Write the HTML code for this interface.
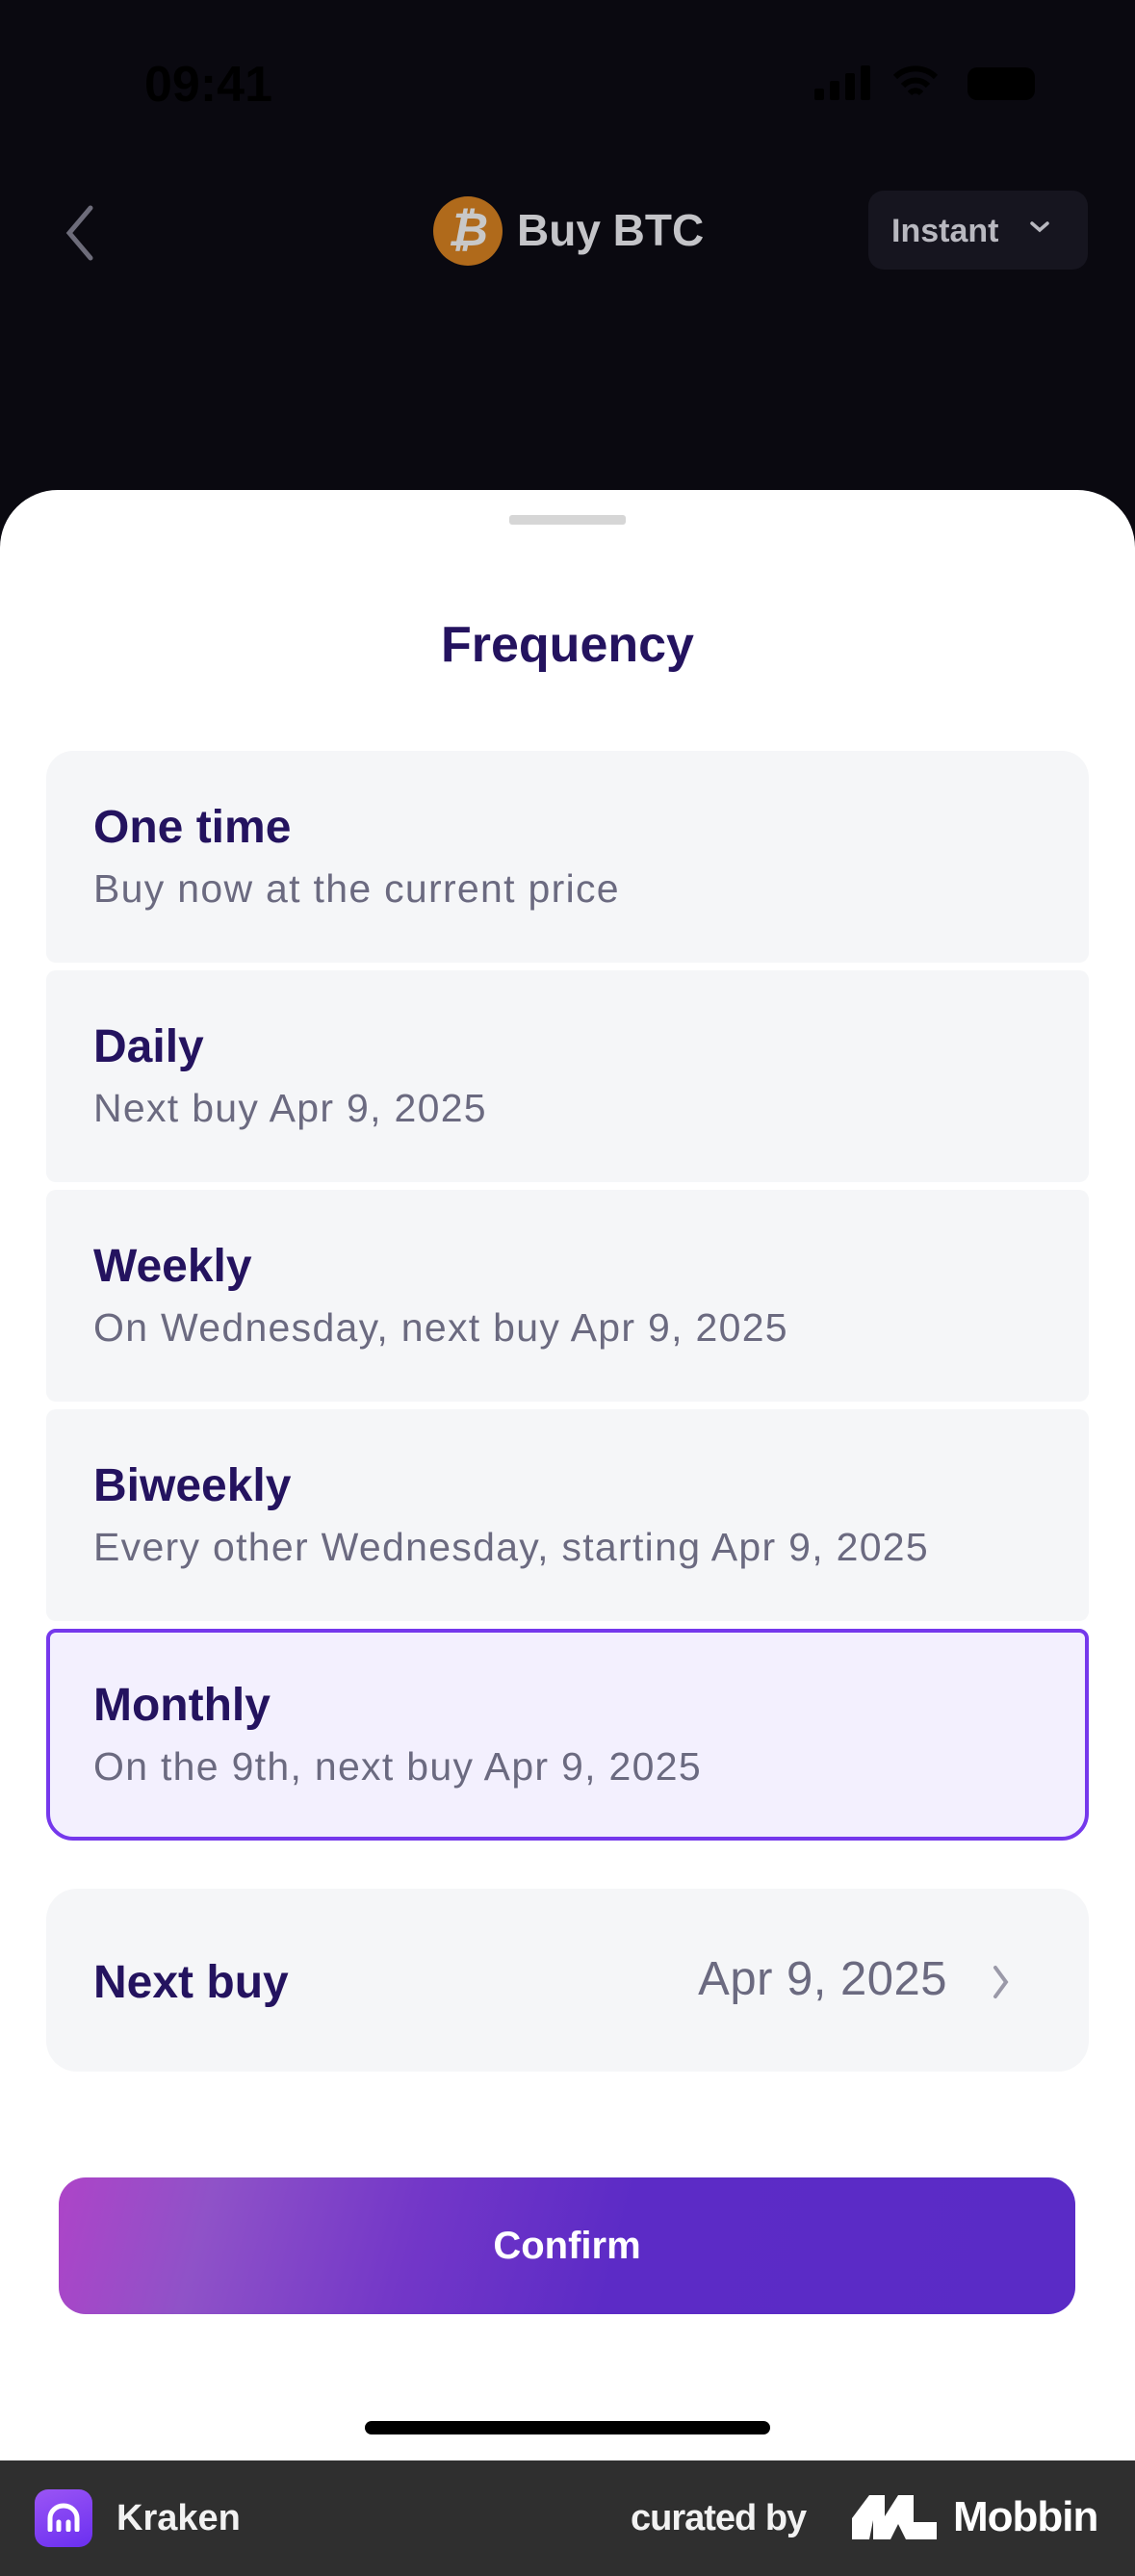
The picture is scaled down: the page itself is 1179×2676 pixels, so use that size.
<!DOCTYPE html>
<html><head><meta charset="utf-8"><style>
*{margin:0;padding:0;box-sizing:border-box}
body{width:1179px;height:2676px;position:relative;overflow:hidden;background:#0a0910;font-family:"Liberation Sans",sans-serif}
.abs{position:absolute}
.card{position:absolute;left:48px;width:1083px;height:220px;background:#f5f6f8;border-radius:10px}
.t{position:absolute;left:49px;top:52px;font-size:48px;font-weight:bold;color:#24135f}
.s{position:absolute;left:49px;top:120px;font-size:41px;letter-spacing:1.3px;color:#6b6a80}
</style></head><body>
<div class="abs" style="left:150px;top:58px;font-size:52px;font-weight:bold;color:#000">09:41</div>
<div class="abs" style="left:846px;top:92px;width:10px;height:12px;background:#000;border-radius:2px"></div>
<div class="abs" style="left:862px;top:84px;width:10px;height:20px;background:#000;border-radius:2px"></div>
<div class="abs" style="left:878px;top:76px;width:10px;height:28px;background:#000;border-radius:2px"></div>
<div class="abs" style="left:894px;top:68px;width:10px;height:36px;background:#000;border-radius:2px"></div>
<svg class="abs" style="left:926px;top:66px" width="50" height="40"><path d="M4 14 A30 30 0 0 1 46 14 M12 23 A18 18 0 0 1 38 23 M19 31 A8 8 0 0 1 31 31" stroke="#000" stroke-width="6" fill="none"/></svg>
<div class="abs" style="left:1005px;top:70px;width:70px;height:34px;background:#000;border-radius:10px"></div>
<svg class="abs" style="left:62px;top:212px" width="40" height="60"><path d="M32 4 L10 30 L32 56" stroke="#6d6c7a" stroke-width="5" fill="none" stroke-linecap="round"/></svg>
<div class="abs" style="left:450px;top:204px;width:72px;height:72px;border-radius:50%;background:#b06a1b;color:#c8c8c8;font-size:48px;font-weight:bold;text-align:center;line-height:72px;font-style:italic">₿</div>
<div class="abs" style="left:537px;top:212px;font-size:46px;font-weight:bold;color:#c4c4c8">Buy BTC</div>
<div class="abs" style="left:902px;top:198px;width:228px;height:82px;border-radius:16px;background:#16151f"></div>
<div class="abs" style="left:926px;top:221px;font-size:34px;font-weight:bold;color:#b8b8bf">Instant</div>
<svg class="abs" style="left:1068px;top:228px" width="24" height="16"><path d="M4 4 L12 11 L20 4" stroke="#b8b8bf" stroke-width="3.5" fill="none" stroke-linecap="round"/></svg>
<div class="abs" style="left:0;top:509px;width:1179px;height:2047px;background:#fff;border-radius:60px 60px 0 0"></div>
<div class="abs" style="left:529px;top:535px;width:121px;height:10px;background:#d6d6d6;border-radius:3px"></div>
<div class="abs" style="left:0;top:640px;width:1179px;text-align:center;font-size:52px;font-weight:bold;color:#24135f">Frequency</div>
<div class="card" style="top:780px;border-radius:28px 28px 10px 10px"><div class="t">One time</div><div class="s">Buy now at the current price</div></div>
<div class="card" style="top:1008px"><div class="t">Daily</div><div class="s">Next buy Apr 9, 2025</div></div>
<div class="card" style="top:1236px"><div class="t">Weekly</div><div class="s">On Wednesday, next buy Apr 9, 2025</div></div>
<div class="card" style="top:1464px"><div class="t">Biweekly</div><div class="s">Every other Wednesday, starting Apr 9, 2025</div></div>
<div class="card" style="top:1692px;background:#f3f0fe;border:4px solid #7538ec;border-radius:10px 10px 28px 28px"><div class="t" style="left:45px;top:48px">Monthly</div><div class="s" style="left:45px;top:116px">On the 9th, next buy Apr 9, 2025</div></div>
<div class="card" style="top:1962px;height:190px;border-radius:32px"><div class="t" style="top:70px">Next buy</div><div class="abs" style="right:147px;top:66px;font-size:49px;letter-spacing:0.5px;color:#6b6a80">Apr 9, 2025</div>
<svg class="abs" style="left:980px;top:77px" width="24" height="40"><path d="M6 5 L17 20 L6 35" stroke="#9a99a8" stroke-width="4" fill="none" stroke-linecap="round"/></svg></div>
<div class="abs" style="left:61px;top:2262px;width:1056px;height:142px;border-radius:28px;background:linear-gradient(105deg,#ad44c8 0%,#8f52c8 15%,#7337c8 35%,#5c2bc6 55%,#5a2bc6 100%);color:#fff;font-size:40px;font-weight:bold;text-align:center;line-height:142px">Confirm</div>
<div class="abs" style="left:379px;top:2515px;width:421px;height:14px;border-radius:7px;background:#000"></div>
<div class="abs" style="left:0;top:2556px;width:1179px;height:120px;background:#2f2f2f"></div>
<div class="abs" style="left:36px;top:2586px;width:60px;height:60px;border-radius:14px;background:linear-gradient(160deg,#9b55f5,#6a2ff0)"></div>
<svg class="abs" style="left:48px;top:2600px" width="36" height="30"><path d="M4 28 V16 A14 13 0 0 1 32 16 V28 M13 28 V20 M23 28 V20" stroke="#fff" stroke-width="5" fill="none" stroke-linecap="round"/></svg>
<div class="abs" style="left:121px;top:2595px;font-size:38px;font-weight:bold;color:#f2f2f2">Kraken</div>
<div class="abs" style="left:655px;top:2595px;font-size:38px;font-weight:bold;color:#f2f2f2;letter-spacing:-1px">curated by</div>
<svg class="abs" style="left:885px;top:2592px" width="88" height="46"><path d="M0 46 V24 L18 0 H34 L34 22 L48 0 H64 V28 H88 V46 H56 L48 30 L40 46 H22 V26 L18 46 Z" fill="#fff"/></svg>
<div class="abs" style="left:990px;top:2590px;font-size:44px;font-weight:bold;color:#fff;letter-spacing:-1px">Mobbin</div>
</body></html>
